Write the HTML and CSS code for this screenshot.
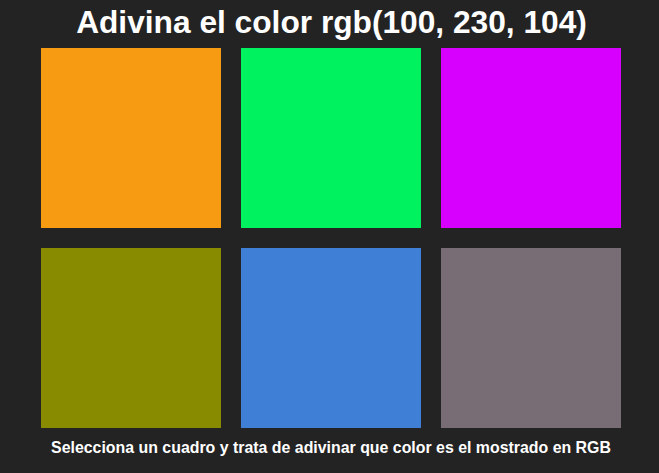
FILE: index.html
```html
<!DOCTYPE html>
<html lang="es">
<head>
<meta charset="utf-8">
<title>Adivina el color</title>
<link rel="stylesheet" href="styles.css">
</head>
<body>
<h1 class="title">Adivina el color <span class="rgb">rgb(100, 230, 104)</span></h1>
<div class="board">
  <div class="square sq-orange"></div>
  <div class="square sq-green"></div>
  <div class="square sq-magenta"></div>
  <div class="square sq-olive"></div>
  <div class="square sq-blue"></div>
  <div class="square sq-gray"></div>
</div>
<p class="hint">Selecciona un cuadro y trata de adivinar que color es el mostrado en RGB</p>
</body>
</html>
```
FILE: styles.css
```css
html, body {
  margin: 0;
  padding: 0;
  background: #232323;
  color: #ffffff;
  font-family: "Liberation Sans", Arial, sans-serif;
}
.title {
  margin: 0;
  padding-top: 4px;
  height: 44px;
  font-size: 31.7px;
  line-height: 36px;
  font-weight: bold;
  text-align: center;
  padding-left: 4px;
}
.board {
  display: grid;
  grid-template-columns: repeat(3, 180px);
  grid-auto-rows: 180px;
  gap: 20px;
  padding-left: 41px;
}
.square { width: 180px; height: 180px; }
.sq-orange { background: #f79b12; }
.sq-green { background: #00f25f; }
.sq-magenta { background: #d700ff; }
.sq-olive { background: #888a00; }
.sq-blue { background: #3f80d6; }
.sq-gray { background: #786c75; }
.hint {
  margin: 0;
  padding-top: 11px;
  font-size: 15.9px;
  line-height: 18px;
  font-weight: bold;
  text-align: center;
  padding-left: 3px;
}
```
